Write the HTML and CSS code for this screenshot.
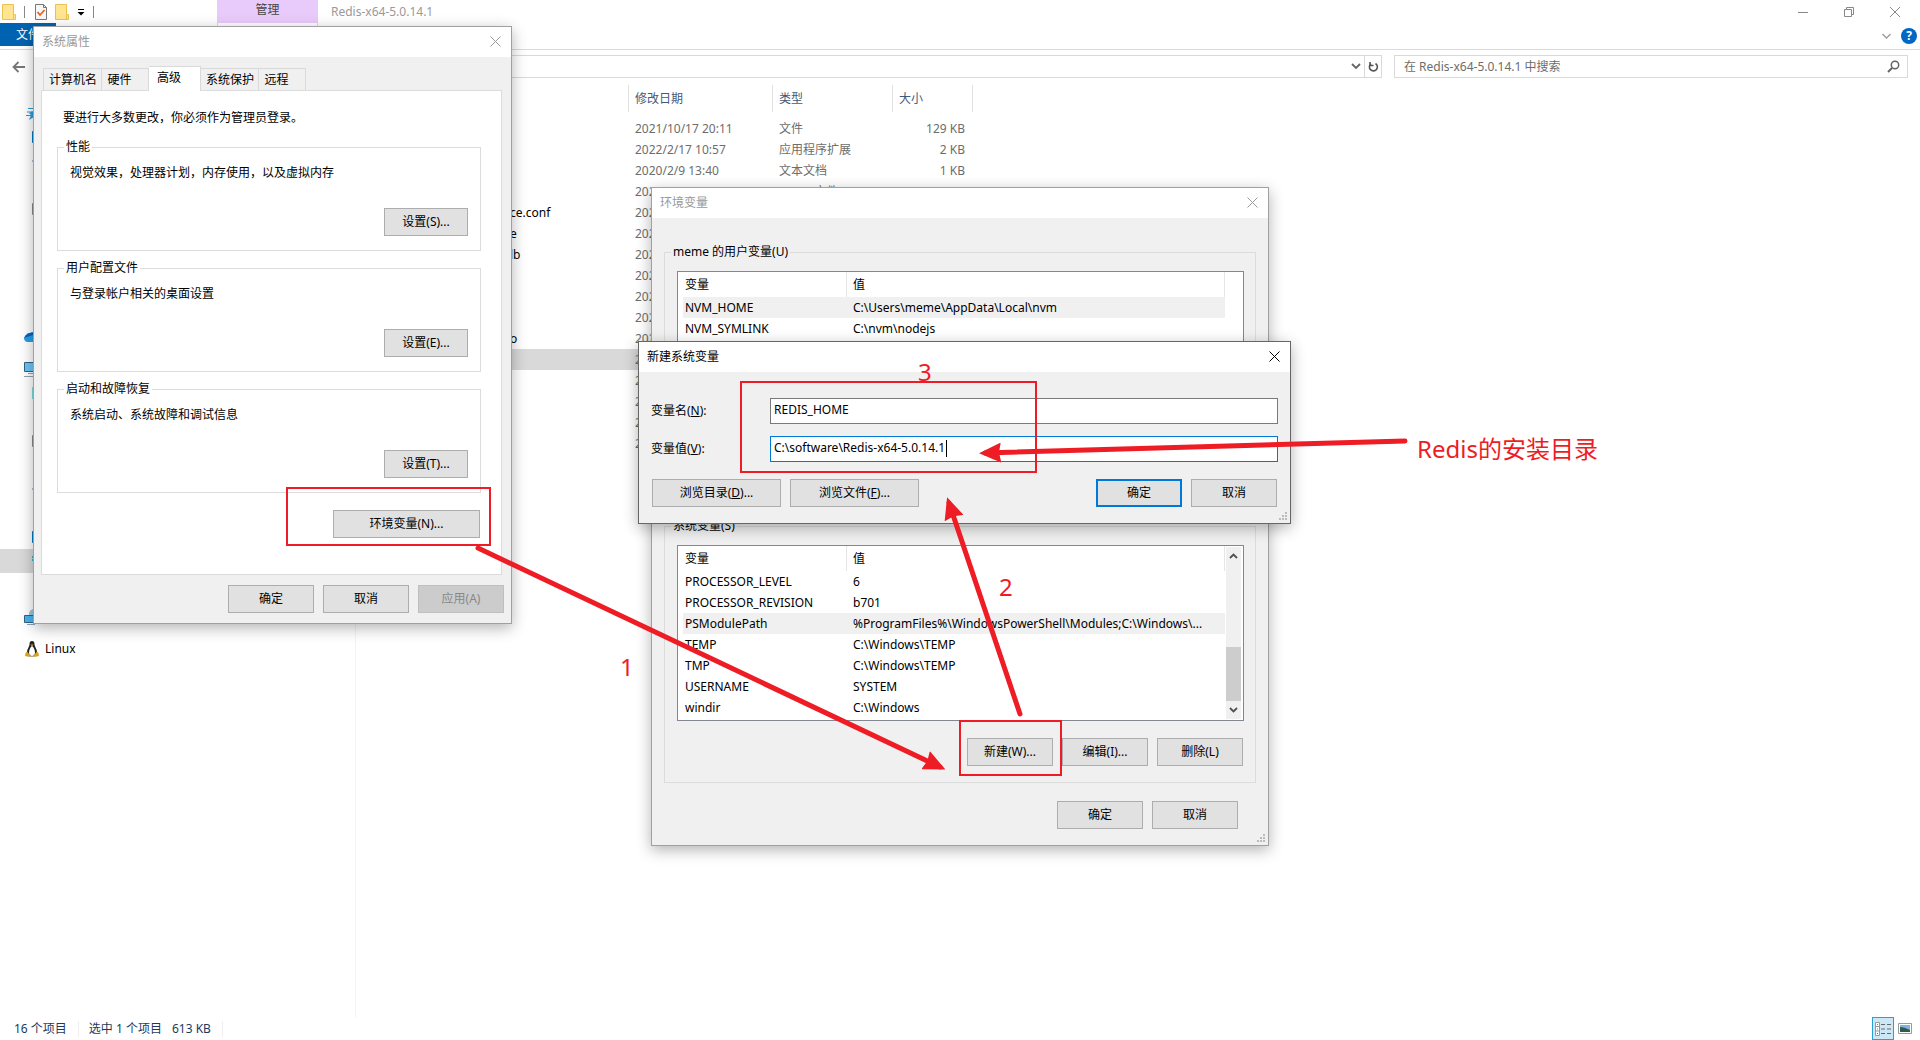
FILE: index.html
```html
<!DOCTYPE html>
<html lang="zh-CN">
<head>
    <meta charset="UTF-8">
    <meta name="viewport" content="width=device-width, initial-scale=1.0">
    <title>Redis-x64-5.0.14.1</title>
    <link rel="stylesheet" href="styles.css">
</head>
<body>
    <div class="explorer">
        <header class="titlebar">
            <div class="quick-bar">
                <svg class="folder" width="14" height="16" viewBox="0 0 14 16"><path d="M.5.5h11v10h2v5H.5z" fill="#ffe591" stroke="#ecc14d"/><path d="M11.5 10.5v5" stroke="#ecc14d"/></svg>
                <span class="bar-line"></span>
                <svg width="12" height="16" viewBox="0 0 12 16"><path d="M.5.5h8l3 3v12H.5z" fill="#f7f7f7" stroke="#777"/><path d="M8.5.5v3h3" fill="none" stroke="#777"/><path d="M2.5 8l2.5 3 4.5-5" fill="none" stroke="#e8601c" stroke-width="1.8"/></svg>
                <svg class="folder" width="14" height="16" viewBox="0 0 14 16"><path d="M.5.5h11v10h2v5H.5z" fill="#ffe591" stroke="#ecc14d"/><path d="M11.5 10.5v5" stroke="#ecc14d"/></svg>
                <svg width="8" height="8" viewBox="0 0 8 8"><path d="M1 1.5h6" stroke="#000"/><path d="M.5 4h7L4 7.5z"/></svg>
                <span class="bar-line"></span>
            </div>
            <div class="manage-tab">管理</div>
            <h1>Redis-x64-5.0.14.1</h1>
            <div class="window-buttons">
                <button aria-label="最小化"><svg width="10" height="10" viewBox="0 0 10 10"><path d="M0 5.5h10"/></svg></button>
                <button aria-label="还原"><svg width="10" height="10" viewBox="0 0 10 10"><path d="M.5 2.5h7v7h-7zM2.5 2.5v-2h7v7h-2"/></svg></button>
                <button aria-label="关闭"><svg width="10" height="10" viewBox="0 0 10 10"><path d="M0 0l10 10M10 0L0 10"/></svg></button>
            </div>
        </header>
        <div class="ribbon">
            <button class="file-tab">文件</button>
            <span class="ribbon-tab"></span>
            <div class="ribbon-right">
                <svg width="9" height="6" viewBox="0 0 9 6"><path d="M.5 1l4 4 4-4" fill="none" stroke="#999" stroke-width="1.3"/></svg>
                <button class="help" aria-label="帮助">?</button>
            </div>
        </div>
        <div class="address-row">
            <a class="back" href="#" aria-label="返回"><svg width="13" height="12" viewBox="0 0 13 12"><path d="M13 6H1.5M6.5 1l-5 5 5 5" fill="none" stroke="#777" stroke-width="1.8"/></svg></a>
            <div class="address">
                <button aria-label="历史记录"><svg width="10" height="7" viewBox="0 0 10 7"><path d="M1 1l4 4 4-4" fill="none" stroke="#666" stroke-width="1.8"/></svg></button>
                <button class="refresh" aria-label="刷新"><svg width="11" height="12" viewBox="0 0 11 12"><path d="M7.5 2.5a4 4 0 1 1-4.5.2M2 1v3.5h3.5" fill="none" stroke="#555" stroke-width="1.6"/></svg></button>
            </div>
            <div class="search">
                <input type="text" aria-label="搜索" placeholder="在 Redis-x64-5.0.14.1 中搜索">
                <svg width="13" height="13" viewBox="0 0 13 13"><path d="M5 8L1 12" stroke="#666" stroke-width="2"/><circle cx="8" cy="5" r="3.7" fill="none" stroke="#666" stroke-width="1.5"/></svg>
            </div>
        </div>
        <main class="content">
            <nav class="sidebar">
                <ul>
                    <li><svg width="16" height="16" viewBox="0 0 16 16"><path d="M11 0l2 6h3v5l-2 5-4-4-5 3 2-5-2-2 4-2z" fill="#2d9be0"/><path d="M2 10.500h5M4 3.500h5M3 7h5" stroke="#2d9be0"/></svg></li>
                    <li class="sub"><svg width="16" height="16" viewBox="0 0 16 16"><path d="M.5 2.5h15v11H.5z" fill="#3db0f0" stroke="#0078c8"/></svg></li>
                    <li class="sub"><svg width="16" height="16" viewBox="0 0 16 16"><path d="M0 8h5" stroke="#4a89c0"/></svg></li>
                    <li></li>
                    <li class="sub"><svg width="16" height="16" viewBox="0 0 16 16"><path d="M.5 2.5h15v11H.5z" fill="#fff" stroke="#888"/></svg></li>
                    <li></li>
                    <li></li>
                    <li class="sub"><svg width="16" height="16" viewBox="0 0 16 16"><path d="M1.5 0v16" stroke="#666"/></svg></li>
                    <li></li>
                </ul>
                <ul>
                    <li><svg width="16" height="16" viewBox="0 0 16 16"><path d="M0 9q2-6 12-6v10H3q-3-1-3-4z" fill="#28a0e8"/><path d="M0 9q2-6 12-6v2z" fill="#0763bd"/></svg></li>
                </ul>
                <ul>
                    <li><svg width="16" height="16" viewBox="0 0 16 16"><path d="M.5 1.5h16v9H.5z" fill="#6cc3f7" stroke="#33637e"/><path d="M4 12.5h12M0 15.5h12" stroke="#8fa3b3"/></svg></li>
                    <li class="sub"><svg width="16" height="16" viewBox="0 0 16 16"><path d="M0 2h14v12H0z" fill="#7fdcdc"/></svg></li>
                    <li class="sub"><svg width="16" height="16" viewBox="0 0 16 16"><path d="M1.5 0v16" stroke="#666"/></svg></li>
                    <li class="sub"><svg width="16" height="16" viewBox="0 0 16 16"><path d="M.5 2.5h15v11H.5z" fill="#fff" stroke="#888"/></svg></li>
                    <li></li>
                    <li class="sub"><svg width="16" height="16" viewBox="0 0 16 16"><path d="M0 8h5" stroke="#4a89c0"/></svg></li>
                    <li></li>
                    <li class="sub"><svg width="16" height="16" viewBox="0 0 16 16"><path d="M.5 2.5h15v11H.5z" fill="#3db0f0" stroke="#0078c8"/></svg></li>
                    <li class="sub selected"><svg width="16" height="16" viewBox="0 0 16 16"><path d="M0 4h6M0 7h6" stroke="#20b0e0" stroke-width="2"/></svg></li>
                    <li class="sub"><svg width="16" height="16" viewBox="0 0 16 16"><path d="M1.5 4v9" stroke="#888"/></svg></li>
                </ul>
                <ul>
                    <li><svg width="16" height="16" viewBox="0 0 16 16"><circle cx="10" cy="5" r="5" fill="#9cc7dc"/><path d="M.5 6.5h12v7H.5z" fill="#48b4f4" stroke="#33637e"/><path d="M3 15.5h8" stroke="#8fa3b3"/></svg></li>
                </ul>
                <ul>
                    <li>
                        <a href="#">
                            <svg width="16" height="16" viewBox="0 0 16 16"><path d="M8 0c-2 0-2.500 1.500-2.500 3.500S3 8 3 11s2 4.500 5 4.500 5-1.500 5-4.500-2.500-5.500-2.500-7.500S10 0 8 0z" fill="#222"/><path d="M8 5c-1.500 1-3 4-3 6.500S6.500 15 8 15s3-1 3-3.500S9.500 6 8 5z" fill="#fff"/><path d="M6.500 3.500h3L8 5.500z" fill="#e0a020"/><path d="M3 10.500l3.500 4-1 1.500L1 15l.5-3zM13 10.500l-3.500 4 1 1.500 4.500-1-.5-3z" fill="#d9a21b"/></svg>
                            Linux
                        </a>
                    </li>
                </ul>
            </nav>
            <table class="files">
                <thead>
                    <tr><th class="name"></th><th class="date">修改日期</th><th class="type">类型</th><th class="size">大小</th></tr>
                </thead>
                <tbody>
                    <tr><td></td><td>2021/10/17 20:11</td><td>文件</td><td>129 KB</td></tr>
                    <tr><td></td><td>2022/2/17 10:57</td><td>应用程序扩展</td><td>2 KB</td></tr>
                    <tr><td></td><td>2020/2/9 13:40</td><td>文本文档</td><td>1 KB</td></tr>
                    <tr><td></td><td>2021/8/28 7:22</td><td>CONF 文件</td><td>61 KB</td></tr>
                    <tr><td>ce.conf</td><td>202</td><td></td><td></td></tr>
                    <tr><td>e</td><td>202</td><td></td><td></td></tr>
                    <tr><td>lb</td><td>202</td><td></td><td></td></tr>
                    <tr><td></td><td>202</td><td></td><td></td></tr>
                    <tr><td></td><td>202</td><td></td><td></td></tr>
                    <tr><td></td><td>202</td><td></td><td></td></tr>
                    <tr><td>o</td><td>202</td><td></td><td></td></tr>
                    <tr class="selected"><td></td><td>2</td><td></td><td></td></tr>
                    <tr><td></td><td>2</td><td></td><td></td></tr>
                    <tr><td></td><td>2</td><td></td><td></td></tr>
                    <tr><td></td><td>2</td><td></td><td></td></tr>
                    <tr><td></td><td>2</td><td></td><td></td></tr>
                </tbody>
            </table>
        </main>
        <footer class="statusbar">
            <span class="count">16 个项目</span>
            <span class="picked">选中 1 个项目</span>
            <span class="bytes">613 KB</span>
            <div class="views">
                <button class="view active" aria-label="详细信息"><svg width="17" height="14" viewBox="0 0 17 14"><path d="M.5.5h4v13h-4zM.5 4.5h4M.5 9h4" fill="#fff" stroke="#999"/><path d="M2 2.5h1M2 7h1" stroke="#39c"/><path d="M2 11.5h1" stroke="#d33"/><path d="M6 2.5h4M12 2.5h4M6 7h4M12 7h4M6 11.5h4M12 11.5h4" stroke="#666"/></svg></button>
                <button class="view" aria-label="大缩略图"><svg width="14" height="11" viewBox="0 0 14 11"><path d="M.5.5h13v10H.5z" fill="#fff" stroke="#999"/><path d="M2 2h10v7H2z" fill="#7db4e8"/><path d="M2 4q4 0 10 3v2H2z" fill="#2f5b4d"/></svg></button>
            </div>
        </footer>
    </div>

    <!-- 系统属性 -->
    <section class="window sys-window">
        <div class="window-title">
            <h2>系统属性</h2>
            <button class="close" aria-label="关闭"><svg width="11" height="11" viewBox="0 0 11 11"><path d="M.5.5l10 10M10.5.5l-10 10"/></svg></button>
        </div>
        <div class="tabs">
            <button class="tab">计算机名</button>
            <button class="tab short">硬件</button>
            <button class="tab active">高级</button>
            <button class="tab">系统保护</button>
            <button class="tab short">远程</button>
        </div>
        <div class="panel">
            <p class="hint">要进行大多数更改，你必须作为管理员登录。</p>
            <fieldset class="setting">
                <legend>性能</legend>
                <p>视觉效果，处理器计划，内存使用，以及虚拟内存</p>
                <button class="btn">设置(S)...</button>
            </fieldset>
            <fieldset class="setting">
                <legend>用户配置文件</legend>
                <p>与登录帐户相关的桌面设置</p>
                <button class="btn">设置(E)...</button>
            </fieldset>
            <fieldset class="setting">
                <legend>启动和故障恢复</legend>
                <p>系统启动、系统故障和调试信息</p>
                <button class="btn">设置(T)...</button>
            </fieldset>
            <button class="btn env-button">环境变量(N)...</button>
        </div>
        <div class="actions">
            <button class="btn">确定</button>
            <button class="btn">取消</button>
            <button class="btn" disabled>应用(A)</button>
        </div>
    </section>

    <!-- 环境变量 -->
    <section class="window env-window">
        <div class="window-title">
            <h2>环境变量</h2>
            <button class="close" aria-label="关闭"><svg width="11" height="11" viewBox="0 0 11 11"><path d="M.5.5l10 10M10.5.5l-10 10"/></svg></button>
        </div>
        <fieldset class="vars">
            <legend>meme 的用户变量(U)</legend>
            <div class="list">
                <table>
                    <thead><tr><th class="var-name">变量</th><th>值</th></tr></thead>
                    <tbody>
                        <tr class="selected"><td>NVM_HOME</td><td>C:\Users\meme\AppData\Local\nvm</td></tr>
                        <tr><td>NVM_SYMLINK</td><td>C:\nvm\nodejs</td></tr>
                    </tbody>
                </table>
            </div>
        </fieldset>
        <fieldset class="vars">
            <legend>系统变量(S)</legend>
            <div class="list">
                <table>
                    <thead><tr><th class="var-name">变量</th><th>值</th></tr></thead>
                    <tbody>
                        <tr><td>PROCESSOR_LEVEL</td><td>6</td></tr>
                        <tr><td>PROCESSOR_REVISION</td><td>b701</td></tr>
                        <tr class="selected"><td>PSModulePath</td><td>%ProgramFiles%\WindowsPowerShell\Modules;C:\Windows\...</td></tr>
                        <tr><td>TEMP</td><td>C:\Windows\TEMP</td></tr>
                        <tr><td>TMP</td><td>C:\Windows\TEMP</td></tr>
                        <tr><td>USERNAME</td><td>SYSTEM</td></tr>
                        <tr><td>windir</td><td>C:\Windows</td></tr>
                    </tbody>
                </table>
                <div class="scrollbar">
                    <svg width="9" height="6" viewBox="0 0 9 6"><path d="M1 5l3.5-3.5L8 5" fill="none" stroke="#505050" stroke-width="1.8"/></svg>
                    <span class="thumb"></span>
                    <svg width="9" height="6" viewBox="0 0 9 6"><path d="M1 1l3.5 3.5L8 1" fill="none" stroke="#505050" stroke-width="1.8"/></svg>
                </div>
            </div>
            <div class="list-actions">
                <button class="btn">新建(W)...</button>
                <button class="btn">编辑(I)...</button>
                <button class="btn">删除(L)</button>
            </div>
        </fieldset>
        <div class="actions">
            <button class="btn">确定</button>
            <button class="btn">取消</button>
        </div>
        <svg class="grip" width="8" height="8" viewBox="0 0 8 8"><path d="M6 0h2v2H6zM3 3h2v2H3zM6 3h2v2H6zM0 6h2v2H0zM3 6h2v2H3zM6 6h2v2H6z" fill="#bbb"/></svg>
    </section>

    <!-- 新建系统变量 -->
    <section class="window new-window">
        <div class="window-title">
            <h2>新建系统变量</h2>
            <button class="close" aria-label="关闭"><svg width="11" height="11" viewBox="0 0 11 11"><path d="M.5.5l10 10M10.5.5l-10 10"/></svg></button>
        </div>
        <form class="new-form" onsubmit="return false">
            <div class="form-row">
                <label for="varName">变量名(<u>N</u>):</label>
                <input type="text" id="varName" value="REDIS_HOME">
            </div>
            <div class="form-row">
                <label for="varValue">变量值(<u>V</u>):</label>
                <input type="text" id="varValue" class="focused" value="C:\software\Redis-x64-5.0.14.1">
                <span class="caret"></span>
            </div>
            <div class="form-actions">
                <button type="button" class="btn browse">浏览目录(<u>D</u>)...</button>
                <button type="button" class="btn browse">浏览文件(<u>F</u>)...</button>
                <button type="submit" class="btn primary">确定</button>
                <button type="button" class="btn">取消</button>
            </div>
        </form>
        <svg class="grip" width="8" height="8" viewBox="0 0 8 8"><path d="M6 0h2v2H6zM3 3h2v2H3zM6 3h2v2H6zM0 6h2v2H0zM3 6h2v2H3zM6 6h2v2H6z" fill="#bbb"/></svg>
    </section>

    <!-- 步骤标注 -->
    <svg class="notes" width="1920" height="1040" viewBox="0 0 1920 1040">
        <defs>
            <marker id="head" viewBox="0 0 22 20" refX="16" refY="10" markerWidth="22" markerHeight="20" markerUnits="userSpaceOnUse" orient="auto">
                <path d="M0 0l22 10-22 10 2-10z" fill="#ee1c24"/>
            </marker>
        </defs>
        <g class="boxes">
            <rect x="287" y="488" width="203" height="57"/>
            <rect x="960" y="721" width="101" height="54"/>
            <rect x="741" y="382" width="295" height="90"/>
        </g>
        <g class="arrows">
            <path d="M478 548L940 767"/>
            <path d="M1020 714L949 503"/>
            <path d="M1405 441L985 453"/>
        </g>
        <g class="captions">
            <text x="620" y="676">1</text>
            <text x="999" y="596">2</text>
            <text x="918" y="381">3</text>
            <text x="1417" y="458">Redis的安装目录</text>
        </g>
    </svg>
</body>
</html>
```
FILE: styles.css
```css
* {
    margin: 0;
    padding: 0;
    box-sizing: border-box;
}
body {
    position: relative;
    height: 100vh;
    overflow: hidden;
    background: #fff;
    color: #000;
    font-family: "Noto Sans", "Noto Sans CJK SC", sans-serif;
    font-size: 12px;
    line-height: 16px;
}
button, input {
    font: inherit;
    color: inherit;
    border: none;
    background: none;
}
h1, h2, th {
    font-size: 12px;
    font-weight: normal;
    text-align: left;
}
ul {
    list-style: none;
}
a {
    color: inherit;
    text-decoration: none;
}
svg {
    display: block;
    flex: none;
}
table {
    border-spacing: 0;
    table-layout: fixed;
}

/* explorer */
.explorer {
    display: flex;
    flex-direction: column;
    height: 100%;
}
.titlebar {
    display: flex;
    height: 23px;
    color: #999;
}
.quick-bar {
    display: flex;
    align-items: center;
    gap: 8px;
    width: 217px;
    padding-left: 2px;
}
.bar-line {
    width: 1px;
    height: 12px;
    margin-right: 2px;
    background: #888;
}
.manage-tab {
    width: 101px;
    padding-top: 2px;
    background: #e9cbfb;
    color: #444;
    text-align: center;
}
.titlebar h1 {
    flex: 1;
    padding: 4px 13px;
}
.window-buttons {
    display: flex;
}
.window-buttons button {
    width: 46px;
    padding-left: 16px;
}
.window-buttons path {
    fill: none;
    stroke: #888;
}
.ribbon {
    display: flex;
    height: 27px;
    border-bottom: 1px solid #dadbdc;
}
.file-tab {
    width: 56px;
    height: 23px;
    background: #0063b1;
    color: #fff;
}
.ribbon-tab {
    width: 101px;
    margin-left: 161px;
    border: 1px solid #dadbdc;
    border-width: 0 1px;
}
.ribbon-right {
    display: flex;
    align-items: center;
    gap: 10px;
    margin-left: auto;
    padding-right: 3px;
}
.help {
    width: 16px;
    height: 16px;
    border-radius: 50%;
    background: #0067c5;
    color: #fff;
    font-weight: bold;
}
.address-row {
    display: flex;
    padding: 5px 12px 7px;
}
.back {
    padding-top: 6px;
    width: 30px;
}
.address {
    flex: 1;
    display: flex;
    justify-content: flex-end;
    height: 23px;
    margin-right: 12px;
    border: 1px solid #d9d9d9;
}
.address button {
    display: flex;
    align-items: center;
    justify-content: center;
    width: 17px;
}
.address .refresh {
    border-left: 1px solid #d9d9d9;
}
.search {
    display: flex;
    align-items: center;
    width: 514px;
    height: 23px;
    padding: 0 7px 0 9px;
    border: 1px solid #d9d9d9;
}
.search input {
    flex: 1;
}
.search input::placeholder {
    color: #6d6d6d;
    opacity: 1;
}
.content {
    flex: 1;
    display: flex;
    align-items: flex-start;
}
.sidebar {
    align-self: stretch;
    width: 356px;
    padding-top: 16px;
    border-right: 1px solid #f3f3f3;
}
.sidebar ul {
    margin-bottom: 8px;
}
.sidebar li {
    height: 24px;
    padding: 4px 0 4px 24px;
}
.sidebar .sub {
    padding-left: 32px;
}
.sidebar a {
    display: flex;
    gap: 5px;
}
.sidebar .selected {
    background: #d9d9d9;
}
.files {
    width: 617px;
    color: #6d6d6d;
}
.files th {
    height: 27px;
    padding-left: 6px;
    border-right: 1px solid #e2e2e2;
    color: #44597a;
}
.files tbody::before {
    content: "";
    display: block;
    height: 6px;
}
.files .name {
    width: 273px;
}
.files .date {
    width: 144px;
}
.files .type {
    width: 120px;
}
.files td {
    height: 21px;
    padding-left: 6px;
}
.files td:first-child {
    padding-left: 154px;
    color: #000;
}
.files td:last-child {
    padding-right: 8px;
    text-align: right;
}
.files .selected {
    background: #d9d9d9;
}
.statusbar {
    display: flex;
    align-items: center;
    height: 23px;
    padding: 0 4px 0 14px;
    color: #1e395b;
}
.count {
    padding-right: 11px;
    border-right: 1px solid #f0f0f0;
}
.picked {
    padding: 0 10px;
}
.bytes {
    padding-right: 11px;
    border-right: 1px solid #f0f0f0;
}
.views {
    display: flex;
    margin-left: auto;
}
.view {
    display: flex;
    align-items: center;
    justify-content: center;
    width: 22px;
    height: 23px;
}
.view.active {
    border: 1px solid #2a9fd6;
    background: #cce8f6;
}

/* windows on the desktop */
.window {
    position: absolute;
    border: 1px solid #a0a0a0;
    background: #f0f0f0;
    box-shadow: 0 4px 14px rgba(0, 0, 0, 0.3);
}
.window-title {
    display: flex;
    justify-content: space-between;
    height: 30px;
    background: #fff;
    color: #999;
}
.window-title h2 {
    padding: 7px 8px;
}
.close {
    width: 29px;
    padding: 0 0 2px 8px;
}
.close path {
    stroke: currentColor;
}
.btn {
    width: 86px;
    height: 28px;
    border: 1px solid #adadad;
    background: #e1e1e1;
    text-align: center;
}
.btn:disabled {
    border-color: #bfbfbf;
    background: #ccc;
    color: #888;
}
.btn.primary {
    border: 2px solid #0078d7;
}
.actions {
    display: flex;
    justify-content: flex-end;
    gap: 9px;
}
.grip {
    position: absolute;
    right: 3px;
    bottom: 3px;
}
fieldset {
    border: 1px solid #dcdcdc;
}
legend {
    padding: 0 2px;
}

/* system properties */
.sys-window {
    left: 33px;
    top: 26px;
    width: 479px;
}
.tabs {
    display: flex;
    align-items: flex-end;
    padding: 9px 9px 0;
}
.tab {
    height: 22px;
    padding: 0 4px 0 5px;
    border: 1px solid #d9d9d9;
    border-width: 1px 1px 0 0;
}
.tab:first-child {
    border-left-width: 1px;
}
.tab.short {
    width: 47px;
    padding-right: 16px;
}
.tab.active {
    position: relative;
    width: 52px;
    height: 25px;
    margin-bottom: -1px;
    padding: 0 18px 3px 7px;
    background: #fff;
}
.panel {
    display: flex;
    flex-direction: column;
    margin: 0 9px 10px 7px;
    padding: 19px 20px 36px 15px;
    border: 1px solid #dcdcdc;
    background: #fff;
}
.hint {
    padding-left: 6px;
    margin-bottom: 13px;
}
.setting {
    display: flex;
    flex-direction: column;
    margin-bottom: 9px;
    padding: 10px 12px 14px 6px;
}
.setting p {
    padding-left: 6px;
    margin-bottom: 27px;
}
.setting .btn {
    align-self: flex-end;
    width: 84px;
}
.env-button {
    align-self: flex-end;
    width: 147px;
    margin: 8px 1px 0 0;
}
.sys-window .actions {
    padding: 0 7px 10px;
}

/* environment variables */
.env-window {
    left: 651px;
    top: 187px;
    width: 618px;
}
.env-window .window-title {
    margin-bottom: 26px;
}
.vars {
    height: 265px;
    margin: 0 12px 9px;
    padding: 11px 11px 0 6px;
}
.list {
    display: flex;
    height: 176px;
    margin-left: 6px;
    padding: 0 2px 0 5px;
    border: 1px solid #828790;
    background: #fff;
}
.list table {
    width: 542px;
    height: min-content;
    margin-right: 1px;
}
.list th {
    height: 25px;
    padding-left: 2px;
    border-right: 1px solid #e5e5e5;
}
.list .var-name {
    width: 164px;
}
.list th:last-child {
    padding-left: 6px;
}
.list td {
    height: 21px;
    padding-left: 2px;
    white-space: nowrap;
}
.list td:last-child {
    padding-left: 6px;
}
.list .selected {
    background: #f0f0f0;
}
.scrollbar {
    display: flex;
    flex-direction: column;
    align-items: center;
    width: 15px;
    margin: 1px 0;
    padding: 6px 0;
    background: #f0f0f0;
}
.thumb {
    width: 15px;
    height: 54px;
    margin: auto 0 6px;
    background: #cdcdcd;
}
.list-actions {
    display: flex;
    justify-content: flex-end;
    gap: 9px;
    margin: 17px 1px 0 0;
}
.env-window .actions {
    padding: 9px 30px 16px;
}

/* new variable */
.new-window {
    left: 638px;
    top: 341px;
    width: 653px;
    border-color: #666;
}
.new-window .window-title {
    color: #000;
}
.new-form {
    padding: 26px 12px 16px;
}
.form-row {
    position: relative;
    display: flex;
    align-items: center;
    margin-bottom: 12px;
}
.form-row label {
    width: 119px;
}
.form-row input {
    flex: 1;
    height: 26px;
    padding: 0 3px 3px;
    border: 1px solid #7a7a7a;
    background: #fff;
}
.form-row .focused {
    border-color: #0078d7;
    outline: none;
}
.caret {
    position: absolute;
    left: 295px;
    top: 4px;
    width: 1px;
    height: 17px;
    background: #000;
}
.form-actions {
    display: flex;
    gap: 9px;
    padding: 5px 1px 0;
}
.browse {
    width: 129px;
}
.primary {
    margin-left: auto;
}

/* step marks */
.notes {
    position: absolute;
    left: 0;
    top: 0;
    pointer-events: none;
}
.boxes {
    fill: none;
    stroke: #ee1c24;
    stroke-width: 2;
}
.arrows {
    fill: none;
    stroke: #ee1c24;
    stroke-width: 5;
    stroke-linecap: round;
    marker-end: url(#head);
}
.captions {
    fill: #ee1c24;
    font-size: 24px;
}
```
